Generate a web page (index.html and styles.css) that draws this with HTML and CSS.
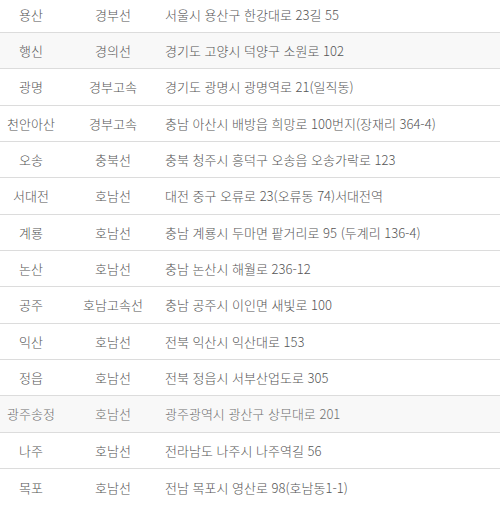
FILE: index.html
```html
<!DOCTYPE html>
<html lang="ko">
<head>
<meta charset="utf-8">
<link rel="stylesheet" href="styles.css">
</head>
<body>
<div class="list">
  <div class="row"><span class="name">용산</span><span class="line">경부선</span><span class="addr">서울시 용산구 한강대로 23길 55</span></div>
  <div class="row shade"><span class="name">행신</span><span class="line">경의선</span><span class="addr">경기도 고양시 덕양구 소원로 102</span></div>
  <div class="row"><span class="name">광명</span><span class="line">경부고속</span><span class="addr">경기도 광명시 광명역로 21(일직동)</span></div>
  <div class="row"><span class="name">천안아산</span><span class="line">경부고속</span><span class="addr">충남 아산시 배방읍 희망로 100번지(장재리 364-4)</span></div>
  <div class="row"><span class="name">오송</span><span class="line">충북선</span><span class="addr">충북 청주시 흥덕구 오송읍 오송가락로 123</span></div>
  <div class="row"><span class="name">서대전</span><span class="line">호남선</span><span class="addr">대전 중구 오류로 23(오류동 74)서대전역</span></div>
  <div class="row"><span class="name">계룡</span><span class="line">호남선</span><span class="addr">충남 계룡시 두마면 팥거리로 95 (두계리 136-4)</span></div>
  <div class="row"><span class="name">논산</span><span class="line">호남선</span><span class="addr">충남 논산시 해월로 236-12</span></div>
  <div class="row"><span class="name">공주</span><span class="line">호남고속선</span><span class="addr">충남 공주시 이인면 새빛로 100</span></div>
  <div class="row"><span class="name">익산</span><span class="line">호남선</span><span class="addr">전북 익산시 익산대로 153</span></div>
  <div class="row"><span class="name">정읍</span><span class="line">호남선</span><span class="addr">전북 정읍시 서부산업도로 305</span></div>
  <div class="row shade light"><span class="name">광주송정</span><span class="line">호남선</span><span class="addr">광주광역시 광산구 상무대로 201</span></div>
  <div class="row"><span class="name">나주</span><span class="line">호남선</span><span class="addr">전라남도 나주시 나주역길 56</span></div>
  <div class="row"><span class="name">목포</span><span class="line">호남선</span><span class="addr">전남 목포시 영산로 98(호남동1-1)</span></div>
</div>
</body>
</html>
```
FILE: styles.css
```css
html, body {
  margin: 0;
  padding: 0;
  background: #fff;
  overflow: hidden;
}
body {
  font-family: "Noto Sans CJK KR", "Noto Sans", sans-serif;
  font-size: 13px;
  font-weight: 300;
  color: #555;
}
.list {
  margin-top: -3.33px;
}
.row {
  display: grid;
  grid-template-columns: 62px 102px 1fr;
  align-items: center;
  height: 36.333px;
  box-sizing: border-box;
  border-bottom: 1px solid #dcdcdc;
  white-space: nowrap;
}
.row:last-child {
  border-bottom: none;
}
.shade {
  background: #f8f8f8;
}
.light {
  color: #707070;
}
.name, .line {
  text-align: center;
}
.addr {
  padding-left: 1px;
}
```
